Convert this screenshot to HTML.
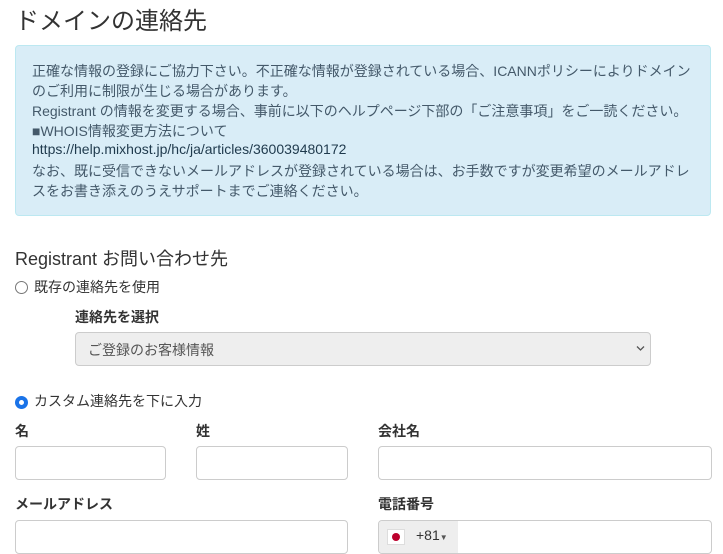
<!DOCTYPE html>
<html><head><meta charset="utf-8"><style>
body{margin:0;width:723px;height:542px;overflow:hidden;background:#fff;font-family:"Liberation Sans","Noto Sans CJK JP",sans-serif;color:#333;position:relative}
.a{position:absolute;white-space:nowrap}
.alert{position:absolute;left:15px;top:45px;width:696px;height:171px;background:#d9edf7;border:1px solid #bce8f1;border-radius:4px;box-sizing:border-box}
.alert div{position:absolute;left:16px;font-size:14px;color:#44596a;white-space:nowrap}
.inp{position:absolute;border:1px solid #ccc;border-radius:4px;background:#fff;box-sizing:border-box;height:34px}
.lb{position:absolute;font-weight:bold;font-size:14px;color:#333;white-space:nowrap}
.radio{position:absolute;width:13px;height:13px;border-radius:50%;box-sizing:border-box}
</style></head><body>
<div class="a" style="left:15px;top:1px;font-size:24px;color:#333">ドメインの連絡先</div>
<div class="alert">
<div style="top:15px">正確な情報の登録にご協力下さい。不正確な情報が登録されている場合、ICANNポリシーによりドメイン</div>
<div style="top:35px">のご利用に制限が生じる場合があります。</div>
<div style="top:55px">Registrant の情報を変更する場合、事前に以下のヘルプページ下部の「ご注意事項」をご一読ください。</div>
<div style="top:75px">■WHOIS情報変更方法について</div>
<div style="top:95px;color:#1f3a4d">https://help.mixhost.jp/hc/ja/articles/360039480172</div>
<div style="top:115px">なお、既に受信できないメールアドレスが登録されている場合は、お手数ですが変更希望のメールアドレ</div>
<div style="top:135px">スをお書き添えのうえサポートまでご連絡ください。</div>
</div>
<div class="a" style="left:15px;top:245px;font-size:18px;color:#333">Registrant お問い合わせ先</div>
<div class="radio" style="left:15px;top:281px;border:1px solid #777"></div>
<div class="a" style="left:34px;top:277px;font-size:14px">既存の連絡先を使用</div>
<div class="lb" style="left:75px;top:307px">連絡先を選択</div>
<div class="inp" style="left:75px;top:332px;width:576px;height:34px;background:#eee;border-color:#ccc"></div>
<div class="a" style="left:88px;top:340px;font-size:14px;color:#555">ご登録のお客様情報</div>
<svg class="a" style="left:636px;top:345px" width="9" height="7"><path d="M1 1.5L4.5 5L8 1.5" stroke="#555" stroke-width="1.3" fill="none"/></svg>
<div class="radio" style="left:15px;top:396px;border:4px solid #1a73e8;background:#fff"></div>
<div class="a" style="left:34px;top:391px;font-size:14px">カスタム連絡先を下に入力</div>
<div class="lb" style="left:15px;top:421px">名</div>
<div class="lb" style="left:196px;top:421px">姓</div>
<div class="lb" style="left:378px;top:421px">会社名</div>
<div class="inp" style="left:15px;top:446px;width:151px"></div>
<div class="inp" style="left:196px;top:446px;width:152px"></div>
<div class="inp" style="left:378px;top:446px;width:334px"></div>
<div class="lb" style="left:15px;top:494px">メールアドレス</div>
<div class="lb" style="left:378px;top:494px">電話番号</div>
<div class="inp" style="left:15px;top:520px;width:333px"></div>
<div class="inp" style="left:378px;top:520px;width:334px;overflow:hidden">
<div style="position:absolute;left:0;top:0;width:79px;height:34px;background:#eee"></div>
<div style="position:absolute;left:8px;top:8px;width:16px;height:14px;background:#fff;border:1px solid #ddd"><div style="position:absolute;left:4px;top:3px;width:8px;height:8px;border-radius:50%;background:#bc002d"></div></div>
<div style="position:absolute;left:37px;top:6px;font-size:14px;color:#333">+81<span style="font-size:8px;color:#555">▼</span></div>
</div>
</body></html>
